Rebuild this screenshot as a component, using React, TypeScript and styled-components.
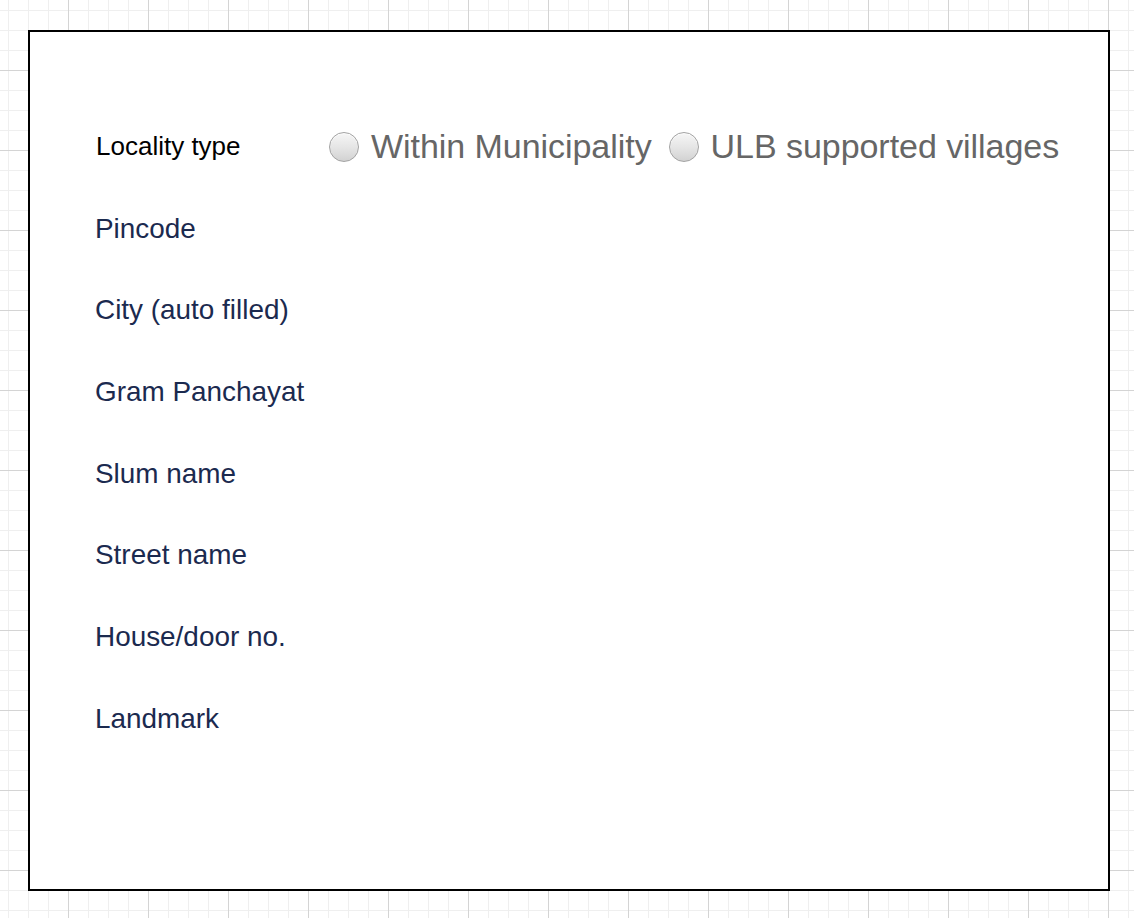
import React from "react";
import styled, { createGlobalStyle } from "styled-components";

const Global = createGlobalStyle`
  html, body {
    margin: 0;
    padding: 0;
  }
  body {
    width: 1134px;
    height: 918px;
    overflow: hidden;
    font-family: "Liberation Sans", Arial, Helvetica, sans-serif;
    background-color: #ffffff;
    background-image:
      linear-gradient(to right, #d4d4d4 0, #d4d4d4 1px, transparent 1px),
      linear-gradient(to bottom, #d4d4d4 0, #d4d4d4 1px, transparent 1px),
      linear-gradient(to right, #efefef 0, #efefef 1px, transparent 1px),
      linear-gradient(to bottom, #efefef 0, #efefef 1px, transparent 1px);
    background-size: 80px 80px, 80px 80px, 20px 20px, 20px 20px;
    background-position: 68px 70px, 68px 70px, 8px 10px, 8px 10px;
  }
`;

const Frame = styled.div`
  box-sizing: border-box;
  margin: 30px 0 0 28px;
  width: 1082px;
  height: 861px;
  border: 2px solid #000;
  background: #fff;
  padding: 74px 0 0 65px;
  display: flex;
  flex-direction: column;
`;

const Row = styled.div`
  height: 81.7px;
  display: flex;
  align-items: center;
`;

const Label = styled.div<{ $dark?: boolean }>`
  font-size: ${(p) => (p.$dark ? "26px" : "27.9px")};
  color: ${(p) => (p.$dark ? "#000" : "#1b2a4f")};
  margin-left: ${(p) => (p.$dark ? "1px" : "0")};
  white-space: nowrap;
`;

const FieldLabel = styled(Label)`
  width: 233px;
`;

const RadioGroup = styled.div`
  display: flex;
  align-items: center;
  gap: 17px;
`;

const RadioOption = styled.label`
  display: flex;
  align-items: center;
  gap: 12px;
  font-size: 34px;
  letter-spacing: -0.05px;
  color: #666;
  white-space: nowrap;
`;

const RadioDot = styled.span`
  box-sizing: border-box;
  width: 30px;
  height: 30px;
  border-radius: 50%;
  border: 1.5px solid #a3a3a3;
  background: linear-gradient(to bottom, #f6f6f6 0%, #e4e4e4 55%, #d2d2d2 100%);
  box-shadow: inset 0 1px 1px rgba(255, 255, 255, 0.8);
`;

const fields = [
  "Pincode",
  "City (auto filled)",
  "Gram Panchayat",
  "Slum name",
  "Street name",
  "House/door no.",
  "Landmark",
];

export default function App() {
  return (
    <>
      <Global />
      <Frame>
        <Row>
          <FieldLabel $dark>Locality type</FieldLabel>
          <RadioGroup>
            <RadioOption>
              <RadioDot />
              Within Municipality
            </RadioOption>
            <RadioOption>
              <RadioDot />
              ULB supported villages
            </RadioOption>
          </RadioGroup>
        </Row>
        {fields.map((f) => (
          <Row key={f}>
            <Label>{f}</Label>
          </Row>
        ))}
      </Frame>
    </>
  );
}
